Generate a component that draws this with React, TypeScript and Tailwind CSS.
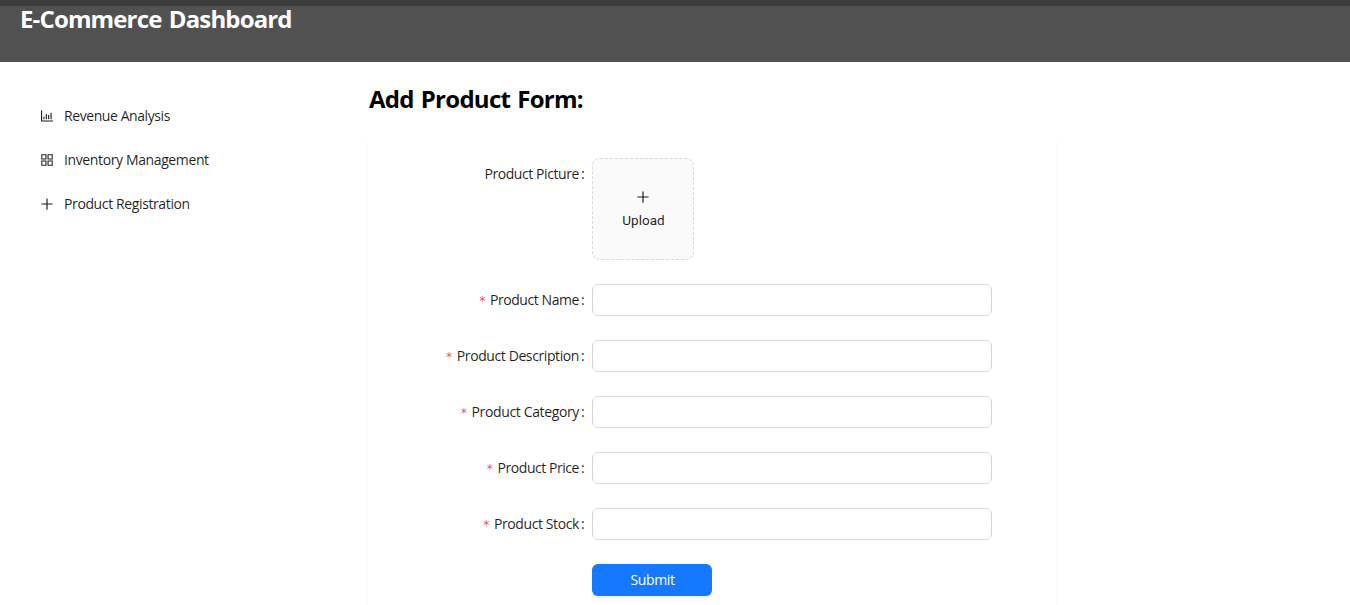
import React from "react";
import { AiOutlineAppstore, AiOutlineBarChart, AiOutlinePlus } from "react-icons/ai";

const menu = [
  { label: "Revenue Analysis", Icon: AiOutlineBarChart, tracking: "tracking-[-0.42px]" },
  { label: "Inventory Management", Icon: AiOutlineAppstore, tracking: "tracking-[-0.38px]" },
  { label: "Product Registration", Icon: AiOutlinePlus, tracking: "tracking-[-0.38px]" },
];

const fields = [
  { label: "Product Name", tracking: "tracking-[-0.43px]" },
  { label: "Product Description", tracking: "tracking-[-0.4px]" },
  { label: "Product Category", tracking: "tracking-[-0.36px]" },
  { label: "Product Price", tracking: "tracking-[-0.45px]" },
  { label: "Product Stock", tracking: "tracking-[-0.4px]" },
];

function Label({ text, tracking, required }: { text: string; tracking: string; required?: boolean }) {
  return (
    <label className="flex h-8 w-50 shrink-0 items-center justify-end whitespace-nowrap pr-[7px]">
      {required && <span className="mr-1 pt-0.5 font-['DejaVu_Sans_Mono',monospace] text-[12px] text-[#ff4d4f]">*</span>}
      <span className={tracking}>{text}</span>
      <span className="ml-0.5 w-1">:</span>
    </label>
  );
}

export default function App() {
  return (
    <div className="flex h-[605px] flex-col overflow-hidden bg-white font-['Open_Sans','Noto_Sans',sans-serif] text-sm leading-[22px] text-black/88">
      <header className="h-[62px] shrink-0 border-t-[6px] border-[#3b3b3b] bg-[#515151] pl-5">
        <h1 className="whitespace-nowrap text-2xl leading-[26px] font-bold tracking-[-0.86px] text-white [word-spacing:2px]">E-Commerce Dashboard</h1>
      </header>
      <div className="flex min-h-0 flex-1">
        <nav className="flex w-[368px] shrink-0 flex-col gap-1 pt-[34px] pl-[39px]">
          {menu.map(({ label, Icon, tracking }) => (
            <a key={label} className="flex h-10 items-center gap-[9px]">
              <Icon className="size-4" />
              <span className={tracking}>{label}</span>
            </a>
          ))}
        </nav>
        <main className="w-[688px] pt-[22px]">
          <h2 className="h-8 whitespace-nowrap pl-px text-2xl leading-[30px] font-bold tracking-[-0.73px] text-black [word-spacing:1.5px]">Add Product Form:</h2>
          <section className="mt-[18px] flex h-[600px] flex-col gap-6 rounded-lg bg-white p-6 shadow-[0_1px_2px_0_rgba(0,0,0,0.03),0_1px_6px_-1px_rgba(0,0,0,0.02),0_2px_4px_0_rgba(0,0,0,0.02)]">
            <div className="flex">
              <Label text="Product Picture" tracking="tracking-[-0.42px]" />
              <button className="flex size-[102px] flex-col items-center justify-center gap-[7px] rounded-lg border border-dashed border-[#d9d9d9] bg-[#fafafa] pb-0.5">
                <AiOutlinePlus className="size-4" />
                <span className="pl-px font-[Roboto,sans-serif] text-[13.5px] leading-4">Upload</span>
              </button>
            </div>
            {fields.map(({ label, tracking }) => (
              <div key={label} className="flex">
                <Label text={label} tracking={tracking} required />
                <input aria-label={label} className="h-8 w-100 rounded-md border border-[#d9d9d9] bg-white px-3 outline-none" />
              </div>
            ))}
            <button className="ml-50 h-8 w-30 shrink-0 rounded-md bg-[#1677ff] pl-px tracking-[-0.35px] text-white shadow-[0_2px_0_rgba(5,145,255,0.1)]">Submit</button>
          </section>
        </main>
      </div>
    </div>
  );
}
